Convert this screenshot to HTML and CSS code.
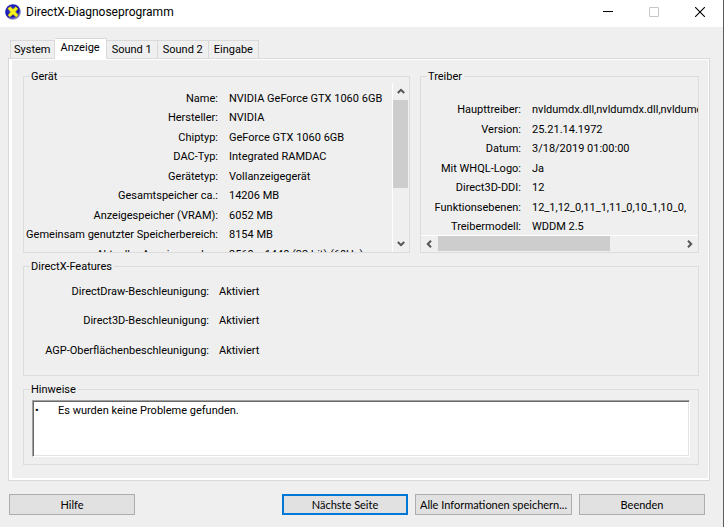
FILE: index.html
```html
<!DOCTYPE html>
<html lang="de">
<head>
    <meta charset="UTF-8">
    <meta name="viewport" content="width=device-width, initial-scale=1.0">
    <title>DirectX-Diagnoseprogramm</title>
    <link rel="stylesheet" href="styles.css">
</head>
<body>
    <div class="window">
        <header class="titlebar">
            <svg class="app-icon" viewBox="0 0 16 16" aria-hidden="true">
                <defs>
                    <radialGradient id="ball" cx="40%" cy="35%" r="65%">
                        <stop offset="0" stop-color="#3a3ae0"/>
                        <stop offset="0.7" stop-color="#1212b4"/>
                        <stop offset="1" stop-color="#9a9ad0"/>
                    </radialGradient>
                </defs>
                <circle cx="8" cy="8" r="7.8" fill="url(#ball)"/>
                <path d="M2.6 4.6 5.2 2.4 8 5 10.8 2.6 13.2 4.8 10.6 7.8 13.4 11 11.2 13.2 8 10.6 5 13.2 2.8 11.2 5.4 8Z" fill="#f6f01c" stroke="#77751a" stroke-width="0.5"/>
            </svg>
            <h1>DirectX-Diagnoseprogramm</h1>
            <div class="window-controls">
                <button type="button" aria-label="Minimieren"><svg viewBox="0 0 10 10"><path d="M0 4.5h10" stroke="#000"/></svg></button>
                <button type="button" aria-label="Maximieren" disabled><svg viewBox="0 0 10 10"><path d="M.5.5h9v9h-9z" fill="none" stroke="#c8c8c8"/></svg></button>
                <button type="button" aria-label="Schließen"><svg viewBox="0 0 10 10"><path d="M0 0l10 10M10 0L0 10" stroke="#000" stroke-width="1.1"/></svg></button>
            </div>
        </header>

        <main>
            <div class="tabs" role="tablist">
                <button type="button" role="tab" aria-selected="false">System</button>
                <button type="button" role="tab" aria-selected="true" class="active">Anzeige</button>
                <button type="button" role="tab" aria-selected="false">Sound 1</button>
                <button type="button" role="tab" aria-selected="false">Sound 2</button>
                <button type="button" role="tab" aria-selected="false">Eingabe</button>
            </div>

            <div class="panel">
                <div class="panel-inner" role="tabpanel">
                    <div class="columns">
                        <fieldset>
                            <legend>Gerät</legend>
                            <div class="device">
                                <dl class="device-list">
                                    <dt>Name:</dt><dd>NVIDIA GeForce GTX 1060 6GB</dd>
                                    <dt>Hersteller:</dt><dd>NVIDIA</dd>
                                    <dt>Chiptyp:</dt><dd>GeForce GTX 1060 6GB</dd>
                                    <dt>DAC-Typ:</dt><dd>Integrated RAMDAC</dd>
                                    <dt>Gerätetyp:</dt><dd>Vollanzeigegerät</dd>
                                    <dt>Gesamtspeicher ca.:</dt><dd>14206 MB</dd>
                                    <dt>Anzeigespeicher (VRAM):</dt><dd>6052 MB</dd>
                                    <dt>Gemeinsam genutzter Speicherbereich:</dt><dd>8154 MB</dd>
                                    <dt>Aktueller Anzeigemodus:</dt><dd>2560 x 1440 (32 bit) (60Hz)</dd>
                                </dl>
                                <div class="scrollbar vertical">
                                    <button type="button" aria-label="Nach oben"><svg viewBox="0 0 8 6"><path d="M.8 5 4 1.8 7.2 5"/></svg></button>
                                    <div class="thumb"></div>
                                    <button type="button" aria-label="Nach unten"><svg viewBox="0 0 8 6"><path d="M.8 1 4 4.2 7.2 1"/></svg></button>
                                </div>
                            </div>
                        </fieldset>

                        <fieldset>
                            <legend>Treiber</legend>
                            <div class="driver">
                                <dl class="driver-list">
                                    <dt>Haupttreiber:</dt><dd>nvldumdx.dll,nvldumdx.dll,nvldumdx.dll</dd>
                                    <dt>Version:</dt><dd>25.21.14.1972</dd>
                                    <dt>Datum:</dt><dd>3/18/2019 01:00:00</dd>
                                    <dt>Mit WHQL-Logo:</dt><dd>Ja</dd>
                                    <dt>Direct3D-DDI:</dt><dd>12</dd>
                                    <dt>Funktionsebenen:</dt><dd>12_1,12_0,11_1,11_0,10_1,10_0,</dd>
                                    <dt>Treibermodell:</dt><dd>WDDM 2.5</dd>
                                </dl>
                                <div class="scrollbar horizontal">
                                    <button type="button" aria-label="Nach links"><svg viewBox="0 0 6 8"><path d="M5 .8 1.8 4 5 7.2"/></svg></button>
                                    <div class="thumb"></div>
                                    <button type="button" aria-label="Nach rechts"><svg viewBox="0 0 6 8"><path d="M1 .8 4.2 4 1 7.2"/></svg></button>
                                </div>
                            </div>
                        </fieldset>
                    </div>

                    <fieldset>
                        <legend>DirectX-Features</legend>
                        <dl class="feature-list">
                            <dt>DirectDraw-Beschleunigung:</dt><dd>Aktiviert</dd>
                            <dt>Direct3D-Beschleunigung:</dt><dd>Aktiviert</dd>
                            <dt>AGP-Oberflächenbeschleunigung:</dt><dd>Aktiviert</dd>
                        </dl>
                    </fieldset>

                    <fieldset>
                        <legend><label for="notes">Hinweise</label></legend>
                        <div class="notes">
                            <textarea id="notes" readonly>•&#9;Es wurden keine Probleme gefunden.</textarea>
                        </div>
                    </fieldset>
                </div>
            </div>

            <footer class="actions">
                <button type="button" class="help">Hilfe</button>
                <button type="button" class="default">Nächste Seite</button>
                <button type="button" class="wide">Alle Informationen speichern...</button>
                <button type="button">Beenden</button>
            </footer>
        </main>
    </div>
</body>
</html>
```

FILE: styles.css
```css
* {
    box-sizing: border-box;
}
body {
    margin: 0;
    background: #efefef;
    color: #000;
    font-family: Roboto, sans-serif;
    font-size: 11px;
    line-height: 13px;
}
button, textarea {
    font: inherit;
    color: inherit;
    margin: 0;
    border-radius: 0;
}
dl, dd {
    margin: 0;
}
.window {
    min-height: 100vh;
    border-right: 1px solid #5c5c5c;
}

/* title bar */
.titlebar {
    display: flex;
    align-items: center;
    height: 27px;
    padding: 0 0 4px 5px;
    background: #fff;
}
.app-icon {
    width: 16px;
    height: 16px;
}
.titlebar h1 {
    flex: 1;
    margin: 0 0 0 5px;
    font-size: 12px;
    font-weight: normal;
    line-height: 16px;
}
.window-controls {
    display: flex;
}
.window-controls button {
    display: grid;
    place-items: center;
    width: 46px;
    height: 22px;
    padding: 0;
    border: 0;
    background: none;
}
.window-controls svg {
    width: 10px;
    height: 10px;
}

main {
    padding: 11px 13px 11px 8px;
}

/* tabs */
.tabs {
    display: flex;
    align-items: flex-end;
    height: 21px;
    margin-bottom: -1px;
    padding-left: 2px;
}
.tabs button {
    height: 19px;
    padding: 0 5px;
    border: 1px solid #d9d9d9;
    border-left-width: 0;
    background: #efefef;
    white-space: nowrap;
}
.tabs button:first-child {
    padding: 0 3px;
    border-left-width: 1px;
}
.tabs .active {
    height: 21px;
    padding: 0 6px 2px;
    border-bottom-color: #fff;
    background: #fff;
}

/* tab page */
.panel {
    border: 1px solid #d9d9d9;
}
.panel-inner {
    display: flex;
    flex-direction: column;
    gap: 7px;
    padding: 10px 9px 13px 11px;
    border: solid #fff;
    border-width: 1px 1px 2px 3px;
}
.columns {
    display: grid;
    grid-template-columns: 387fr 279fr;
    gap: 10px;
}
fieldset {
    min-width: 0;
    margin: 0;
    padding: 0;
    border: 1px solid #dcdcdc;
}
legend {
    height: 13px;
    margin-left: 6px;
    padding: 0 2px 0 1px;
}
dl {
    display: grid;
    align-items: center;
    white-space: nowrap;
}
dt {
    text-align: right;
}

.device {
    display: flex;
    height: 169px;
    padding-right: 1px;
}
.device-list {
    flex: 1;
    min-width: 0;
    overflow: hidden;
    padding-top: 5px;
    grid-template-columns: 194px 1fr;
    grid-auto-rows: 20px 19px;
    align-content: start;
    column-gap: 11px;
}
.driver {
    display: flex;
    flex-direction: column;
    height: 169px;
}
.driver-list {
    flex: 1;
    overflow: hidden;
    padding-top: 17px;
    grid-template-columns: 100px 1fr;
    grid-auto-rows: 19px 20px;
    align-content: start;
    column-gap: 11px;
}
.feature-list {
    padding: 3px 0 10px;
    grid-template-columns: 185px 1fr;
    grid-auto-rows: 30px 29px;
    column-gap: 10px;
}

/* scrollbars */
.scrollbar {
    display: flex;
    flex: none;
    background: #efefef;
}
.scrollbar button {
    display: grid;
    place-items: center;
    flex: none;
    width: 16px;
    height: 16px;
    padding: 0;
    border: 0;
    background: none;
}
.scrollbar svg {
    width: 8px;
    height: 8px;
    fill: none;
    stroke: #555;
    stroke-width: 2;
}
.scrollbar .thumb {
    background: #cdcdcd;
}
.scrollbar button:last-child {
    margin-top: auto;
    margin-left: auto;
}
.vertical {
    flex-direction: column;
    width: 16px;
    border-left: 1px solid #fff;
}
.vertical .thumb {
    height: 52%;
    margin-top: 1px;
}
.horizontal {
    height: 17px;
    border-top: 1px solid #fff;
}
.horizontal .thumb {
    width: 62%;
    height: 15px;
    margin-left: 1px;
}

.notes {
    padding: 4px 8px 7px;
}
.notes textarea {
    display: block;
    width: 100%;
    height: 57px;
    padding: 3px 2px;
    border: 1px solid;
    border-color: #a0a0a0 #fff #fff #a0a0a0;
    box-shadow: inset 1px 1px #696969, inset -1px -1px #e3e3e3;
    outline: none;
    resize: none;
    background: #fff;
    tab-size: 23px;
}

/* bottom buttons */
.actions {
    display: flex;
    gap: 7px;
    padding: 13px 5px 0 1px;
}
.actions button {
    width: 126px;
    height: 21px;
    padding: 0;
    border: 1px solid #adadad;
    background: #e1e1e1;
    font: 11px/17px Lato, sans-serif;
    white-space: nowrap;
}
.actions .help {
    margin-right: auto;
}
.actions .default {
    border: 2px solid #0078d7;
}
.actions .wide {
    width: 157px;
}
```
